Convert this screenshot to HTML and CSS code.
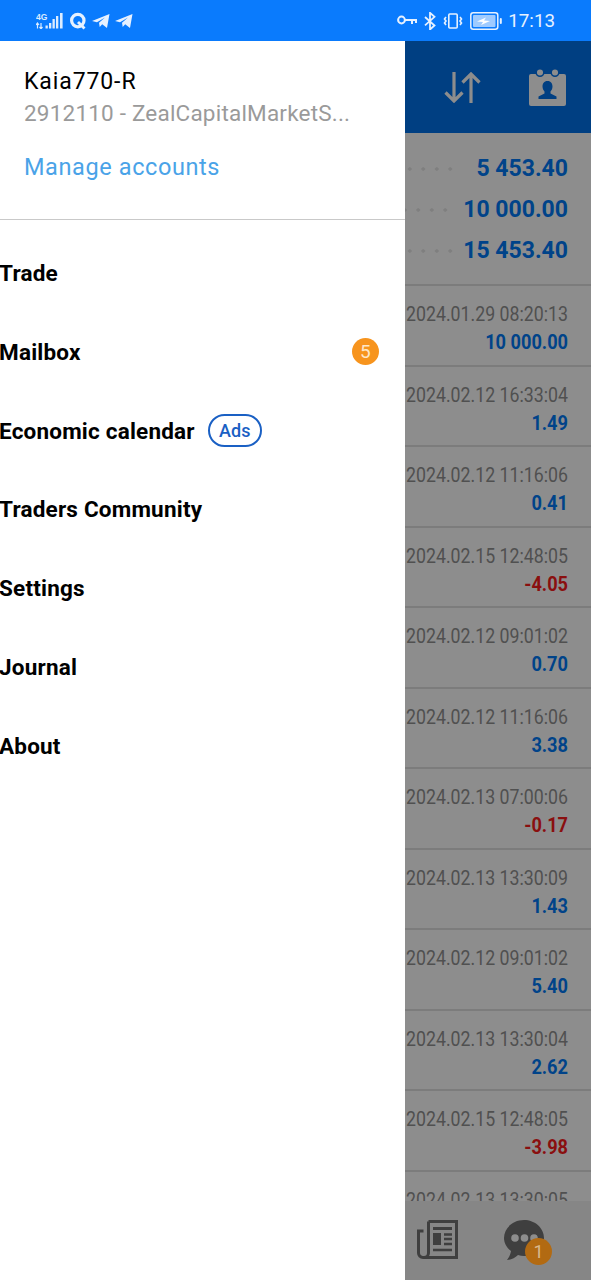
FILE: index.html
```html
<!DOCTYPE html>
<html lang="en">
<head>
  <meta charset="utf-8">
  <title>Accounts</title>
  <meta name="viewport" content="width=device-width, initial-scale=1">
  <link rel="stylesheet" href="styles.css">
</head>
<body>
  <div class="status-bar">
    <div class="status-left">
      <svg width="28" height="16" viewBox="0 0 28 16" fill="#dcecff">
        <text x="0" y="7" class="net">4G</text>
        <path d="M1.500 15.500v-5M0 12l1.500-2L3 12M5 10v5.500M3.500 14L5 15.800 6.500 14" fill="none" stroke="#dcecff" stroke-width="1.200"/>
        <rect x="9.500" y="12.500" width="2.300" height="3"/>
        <rect x="13" y="10" width="2.300" height="5.500"/>
        <rect x="16.500" y="6" width="2.300" height="9.500"/>
        <rect x="20" y="3" width="2.300" height="12.500"/>
        <rect x="24" y="0" width="2.600" height="15.500"/>
      </svg>
      <svg width="18" height="18" viewBox="0 0 18 18" fill="none" stroke="#e6f1ff" stroke-width="3.200">
        <circle cx="8.800" cy="8.600" r="6.200"/>
        <path d="M9 10l6.500 6.500" stroke-width="2.800"/>
      </svg>
      <svg width="18" height="16" viewBox="0 0 18 16" fill="#e6f1ff"><path d="M0 8L17.500 1 15 15 10.200 11.300 7.700 14 7 9.800 13 4.500 5 9.200z"/></svg>
      <svg width="18" height="16" viewBox="0 0 18 16" fill="#e6f1ff"><path d="M0 8L17.500 1 15 15 10.200 11.300 7.700 14 7 9.800 13 4.500 5 9.200z"/></svg>
    </div>
    <div class="status-right">
      <svg width="20" height="12" viewBox="0 0 20 12" fill="none" stroke="#e6f1ff" stroke-width="2">
        <circle cx="4.500" cy="5" r="3.400"/>
        <path d="M8 5h12M15 5v4M19 5v3"/>
      </svg>
      <svg width="12" height="18" viewBox="0 0 12 18" fill="none" stroke="#e6f1ff" stroke-width="1.800">
        <path d="M1 5l9.500 8.500L6 17.500V.800l4.500 4-9.500 8.500"/>
      </svg>
      <svg width="20" height="16" viewBox="0 0 20 16" fill="none" stroke="#e6f1ff" stroke-width="1.600">
        <rect x="5.800" y="1" width="8.400" height="14" rx="1"/>
        <path d="M3 4L1.500 6 3 8 1.500 10 3 12M17 4l1.500 2L17 8l1.500 2L17 12"/>
      </svg>
      <svg width="32" height="18" viewBox="0 0 32 18" fill="none">
        <rect x="0.800" y="0.800" width="27" height="16.400" rx="2.500" stroke="#e6f1ff" stroke-width="1.500"/>
        <rect x="3" y="3" width="22.500" height="12" rx="1" fill="#9fcbff"/>
        <path d="M7 9.500l9-4-2 3 6 .5-9 4 2-3z" fill="#fff"/>
        <rect x="29.800" y="6" width="2" height="6" rx="1" fill="#e6f1ff"/>
      </svg>
      <span class="clock">17:13</span>
    </div>
  </div>

  <div class="screen">
    <aside class="drawer">
      <div class="account">
        <div class="account-name">Kaia770-R</div>
        <div class="account-server">2912110 - ZealCapitalMarketS...</div>
        <div class="manage">Manage accounts</div>
      </div>
      <nav class="menu">
        <div class="menu-item">Trade</div>
        <div class="menu-item menu-split">Mailbox <span class="count">5</span></div>
        <div class="menu-item">Economic calendar <span class="ads">Ads</span></div>
        <div class="menu-item">Traders Community</div>
        <div class="menu-item">Settings</div>
        <div class="menu-item">Journal</div>
        <div class="menu-item">About</div>
      </nav>
    </aside>

    <main class="behind">
      <header class="toolbar">
        <svg width="38" height="31" viewBox="0 0 38 31" fill="none" stroke="#8d8d8d" stroke-width="3.200">
          <path d="M10 0v29M1.500 20.500L10 29l8.500-8.500"/>
          <path d="M27 31V2M18.500 10.500L27 2l8.500 8.500"/>
        </svg>
        <svg width="39" height="38" viewBox="0 0 39 38" fill="#8d8d8d">
          <path d="M3 6h33a2 2 0 0 1 2 2v28a2 2 0 0 1-2 2H3a2 2 0 0 1-2-2V8a2 2 0 0 1 2-2z"/>
          <circle cx="12" cy="4.500" r="3.800" stroke="#003f82" stroke-width="1.500"/>
          <circle cx="27" cy="4.500" r="3.800" stroke="#003f82" stroke-width="1.500"/>
          <path fill="#003f82" d="M19.500 13c3.500 0 5 2.500 5 5.500 0 2-1 4-2 5v2l6 3v2.500H10.500V28.500l6-3v-2c-1-1-2-3-2-5 0-3 1.500-5.500 5-5.500z"/>
        </svg>
      </header>

      <section class="summary">
        <div class="summary-row"><span class="dots"></span><span class="amount">5 453.40</span></div>
        <div class="summary-row"><span class="dots dots-short"></span><span class="amount">10 000.00</span></div>
        <div class="summary-row"><span class="dots"></span><span class="amount">15 453.40</span></div>
      </section>

      <section class="deals">
        <div class="deal"><div class="deal-time">2024.01.29 08:20:13</div><div class="deal-value">10 000.00</div></div>
        <div class="deal"><div class="deal-time">2024.02.12 16:33:04</div><div class="deal-value">1.49</div></div>
        <div class="deal"><div class="deal-time">2024.02.12 11:16:06</div><div class="deal-value">0.41</div></div>
        <div class="deal"><div class="deal-time">2024.02.15 12:48:05</div><div class="deal-value loss">-4.05</div></div>
        <div class="deal"><div class="deal-time">2024.02.12 09:01:02</div><div class="deal-value">0.70</div></div>
        <div class="deal"><div class="deal-time">2024.02.12 11:16:06</div><div class="deal-value">3.38</div></div>
        <div class="deal"><div class="deal-time">2024.02.13 07:00:06</div><div class="deal-value loss">-0.17</div></div>
        <div class="deal"><div class="deal-time">2024.02.13 13:30:09</div><div class="deal-value">1.43</div></div>
        <div class="deal"><div class="deal-time">2024.02.12 09:01:02</div><div class="deal-value">5.40</div></div>
        <div class="deal"><div class="deal-time">2024.02.13 13:30:04</div><div class="deal-value">2.62</div></div>
        <div class="deal"><div class="deal-time">2024.02.15 12:48:05</div><div class="deal-value loss">-3.98</div></div>
        <div class="deal"><div class="deal-time">2024.02.13 13:30:05</div></div>
      </section>

      <footer class="tabbar">
        <svg width="41" height="39" viewBox="0 0 41 39" fill="none" stroke="#3f3f3f" stroke-width="3">
          <path d="M11.500 1.500h28v36H6a4.500 4.500 0 0 1-4.500-4.500V11h5"/>
          <path d="M11.500 1.500V33a4.500 4.500 0 0 1-4.500 4.500"/>
          <path d="M16 8.500h19"/>
          <rect x="16" y="13" width="8" height="12" fill="#3f3f3f" stroke="none"/>
          <path d="M27 14.500h8M27 19h8M27 24h8M16 30h19" stroke-width="2.500"/>
        </svg>
        <div class="chat">
          <svg width="40" height="40" viewBox="0 0 40 40">
            <path fill="#3f3f3f" d="M20 0c11 0 20 8 20 18s-9 18-20 18c-2 0-4-.3-6-1-3 3-6 4.500-11 5 2-2.500 3.500-5.500 4-9C3 28 0 23.500 0 18 0 8 9 0 20 0z"/>
            <circle cx="11" cy="18" r="3.800" fill="#8d8d8d"/>
            <circle cx="20.500" cy="18" r="3.800" fill="#8d8d8d"/>
            <circle cx="30" cy="18" r="3.800" fill="#8d8d8d"/>
          </svg>
          <span class="chat-badge">1</span>
        </div>
      </footer>
    </main>
  </div>
</body>
</html>
```

FILE: styles.css
```css
* {
  box-sizing: border-box;
}
html, body {
  height: 100%;
}
body {
  margin: 0;
  font-family: Roboto, "Liberation Sans", sans-serif;
  display: flex;
  flex-direction: column;
  height: 1280px;
  overflow: hidden;
  background: #8d8d8d;
  color: #000;
}
.status-bar {
  height: 41px;
  flex: none;
  background: #0a7bfd;
  display: flex;
  align-items: center;
  justify-content: space-between;
  padding: 0 36px;
}
.status-left {
  display: flex;
  align-items: center;
  gap: 5px;
}
.status-right {
  display: flex;
  align-items: center;
  gap: 7px;
}
.net {
  font-family: "Liberation Sans", sans-serif;
  font-size: 8.500px;
  font-weight: 700;
}
.clock {
  font-size: 18.800px;
  color: #e6f1ff;
  margin-left: -1px;
}
.screen {
  flex: 1;
  display: flex;
  min-height: 0;
}
.drawer {
  width: 405px;
  flex: none;
  background: #fff;
}
.account {
  height: 179px;
  padding: 27px 24px 0;
  border-bottom: 1px solid #c9c9c9;
}
.account-name {
  font-size: 23px;
  letter-spacing: 0.900px;
  line-height: 28px;
}
.account-server {
  font-size: 22.500px;
  letter-spacing: 0.200px;
  line-height: 28px;
  color: #9a9a9a;
  margin-top: 3px;
  white-space: nowrap;
}
.manage {
  font-size: 23.500px;
  letter-spacing: 0.600px;
  line-height: 30px;
  color: #4aa3e8;
  margin-top: 25px;
}
.menu {
  padding-top: 13.500px;
}
.menu-item {
  height: 78.830px;
  display: flex;
  align-items: center;
  font-size: 22.500px;
  letter-spacing: 0.200px;
  font-weight: 700;
  margin-left: -1px;
}
.menu-split {
  justify-content: space-between;
  padding-right: 26px;
}
.count {
  width: 27px;
  height: 27px;
  border-radius: 50%;
  background: #f7941d;
  color: #fde7c8;
  font-size: 19px;
  font-weight: 400;
  display: flex;
  align-items: center;
  justify-content: center;
}
.ads {
  margin-left: 13px;
  width: 54px;
  height: 33px;
  border: 2px solid #1a60c4;
  border-radius: 17px;
  color: #1a60c4;
  font-size: 18px;
  font-weight: 500;
  letter-spacing: 0;
  display: flex;
  align-items: center;
  justify-content: center;
}
.behind {
  flex: 1;
  min-width: 0;
  position: relative;
  overflow: hidden;
  background: #8d8d8d;
  display: flex;
  flex-direction: column;
}
.toolbar {
  height: 92px;
  flex: none;
  background: #003f82;
  display: flex;
  align-items: center;
  justify-content: flex-end;
  gap: 46px;
  padding: 0 24px 0 0;
}
.summary {
  height: 153px;
  flex: none;
  padding: 15px 23px 0 0;
  border-bottom: 2px solid #7c7c7c;
}
.summary-row {
  height: 41px;
  display: flex;
  align-items: center;
  justify-content: space-between;
}
.dots {
  width: 52px;
  height: 4px;
  background-image: radial-gradient(circle, #7f7f7f 1.500px, transparent 2px);
  background-size: 13.500px 4px;
  background-position: right center;
}
.dots-short {
  width: 47px;
}
.amount {
  font-size: 23px;
  font-weight: 700;
  color: #004389;
}
.deal {
  height: 80.500px;
  flex: none;
  border-bottom: 2px solid #7c7c7c;
  padding: 15px 23px 0 0;
  text-align: right;
}
/* the source font is narrower than Roboto, so squeeze it */
.deal-time {
  display: flex;
  justify-content: flex-end;
  font-size: 21px;
  line-height: 27px;
  color: #505050;
  white-space: nowrap;
  transform: scaleX(0.845);
  transform-origin: right center;
}
.deal-value {
  font-size: 21px;
  font-weight: 700;
  line-height: 28px;
  color: #004389;
  transform: scaleX(0.866);
  transform-origin: right center;
}
.loss {
  color: #8a0f0f;
}
.tabbar {
  position: absolute;
  left: 0;
  right: 0;
  bottom: 0;
  height: 79px;
  background: #868686;
  display: flex;
  align-items: flex-start;
  justify-content: flex-end;
  gap: 46px;
  padding: 19px 47px 0 0;
}
.chat {
  position: relative;
  width: 40px;
  height: 40px;
}
.chat-badge {
  position: absolute;
  right: -8px;
  bottom: -5px;
  width: 27px;
  height: 27px;
  border-radius: 50%;
  background: #b26a12;
  color: #d9b98e;
  font-size: 18px;
  display: flex;
  align-items: center;
  justify-content: center;
}
```
